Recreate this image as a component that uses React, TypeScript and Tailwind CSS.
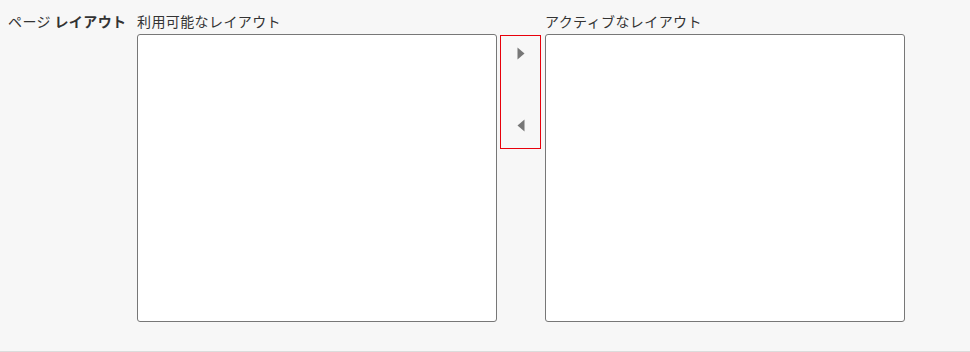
export default function App() {
  return (
    <div
      className="flex h-[352px] w-[970px] border-b border-[#dcdcdc] bg-[#f7f7f7] pt-[11px] text-[14px] leading-5 tracking-[0.4px] text-[#333]"
      style={{ fontFamily: '"Noto Sans CJK JP", "Noto Sans", sans-serif' }}
    >
      {/* field label */}
      <div className="w-[137px] shrink-0 pl-2">
        ページ <span className="font-bold">レイアウト</span>
      </div>

      {/* available */}
      <div className="w-[360px] shrink-0">
        <div className="mb-[3px] h-5">利用可能なレイアウト</div>
        <div className="h-[288px] rounded-[3px] border border-[#777] bg-white" />
      </div>

      {/* move buttons */}
      <div className="ml-[3px] mt-6 flex h-[114px] w-[41px] shrink-0 flex-col items-center border border-[#e8000b]">
        <svg className="mt-[11px]" width="8" height="13" viewBox="0 0 8 13">
          <path d="M0.5 0.5 L7.5 6.5 L0.5 12.5 Z" fill="#777" />
        </svg>
        <svg className="mt-[59px]" width="8" height="13" viewBox="0 0 8 13">
          <path d="M7.5 0.5 L0.5 6.5 L7.5 12.5 Z" fill="#777" />
        </svg>
      </div>

      {/* active */}
      <div className="ml-[4px] w-[360px] shrink-0">
        <div className="mb-[3px] h-5">アクティブなレイアウト</div>
        <div className="h-[288px] rounded-[3px] border border-[#777] bg-white" />
      </div>
    </div>
  );
}
